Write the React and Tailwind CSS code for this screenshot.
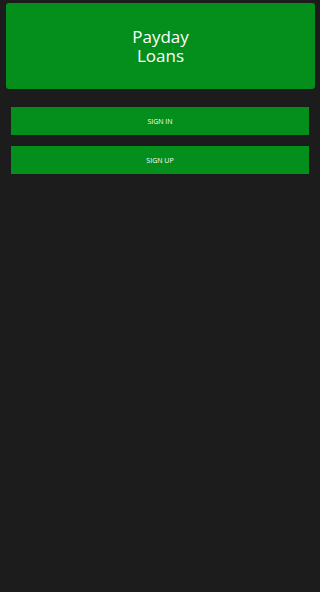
export default function App() {
  return (
    <div className="min-h-[592px] w-full bg-[#1c1c1c] pt-[3px]" style={{ fontFamily: '"Open Sans", sans-serif' }}>
      <div className="ml-[6px] mr-[5px] flex h-[86px] items-center justify-center rounded-[3px] bg-[#048e1c] text-center text-[17px] leading-[19px] text-white">
        <p>
          Payday
          <br />
          Loans
        </p>
      </div>
      <div className="mx-[11px] mt-[18px] flex flex-col gap-[11px]">
        <div className="flex h-[28px] items-center justify-center bg-[#048e1c] text-[7px] leading-none text-white">SIGN IN</div>
        <div className="flex h-[28px] items-center justify-center bg-[#048e1c] text-[7px] leading-none text-white">SIGN UP</div>
      </div>
    </div>
  );
}
